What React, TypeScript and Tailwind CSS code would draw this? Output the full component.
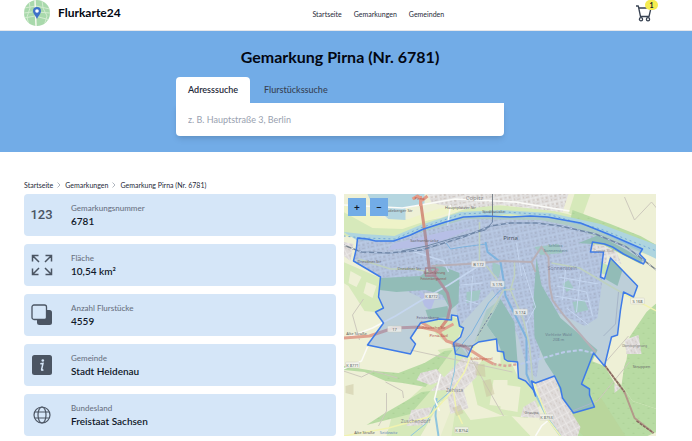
import React from "react";

const boundary =
  "M357 238 L367 239 L375 241 L393 241 L410 235 L423 229 L445 222 L463 217 L486 216 L510 217 L530 216 L547 217 L580 223 L610 235 L642 249 L639 254 L645 260 L643 264 L623 254 L612 247 L604 244 L592 242 L590 252 L603 252 L600 277 L604 279 L610 258 L637 286 L633 297 L623 292 L620 310 L617 335 L611 337 L604 366 L593 353 L581 384 L589 389 L589 395 L594 407 L573 413 L562 398 L560 388 L554 376 L535 383 L531 381 L535 396 L533 390 L525 381 L518 378 L517 362 L507 361 L504 359 L503 352 L497 351 L496 339 L478 342 L472 346 L467 357 L455 354 L453 343 L460 337 L463 328 L459 326 L457 316 L451 315 L451 320 L439 319 L420 323 L410 338 L415 344 L410 354 L367 345 L383 323 L375 312 L383 308 L378 297 L380 277 L353 261 L356 248 Z";

type Label = { x: number; y: number; t: string; c?: string; s?: number };

const labels: Label[] = [
  { x: 510, y: 240, t: "Pirna", c: "#4b5563", s: 6 },
  { x: 562, y: 270, t: "Sonnenstein", c: "#7c86a3", s: 5 },
  { x: 603, y: 252, t: "Copitz-Süd", c: "#9a948f", s: 4 },
  { x: 474, y: 200, t: "Copitz", c: "#8d8d8d", s: 6 },
  { x: 454, y: 392, t: "Zehista", c: "#8d8d8d", s: 5 },
  { x: 415, y: 423, t: "Zuschendorf", c: "#8d8d8d", s: 5 },
  { x: 634, y: 347, t: "Obervogelgesang", c: "#777777", s: 3 },
  { x: 493, y: 213, t: "Stadtbrücke", s: 4 },
  { x: 424, y: 242, t: "Sachsenbrücke", s: 4 },
  { x: 398, y: 212, t: "Radeberger Str", s: 4 },
  { x: 460, y: 209, t: "Hauptplatzer Str", s: 4 },
  { x: 369, y: 263, t: "Dresdner Str", s: 4 },
  { x: 409, y: 270, t: "Dresdner Str", s: 4 },
  { x: 434, y: 274, t: "Südumfahrung", c: "#8a5555", s: 3 },
  { x: 433, y: 280, t: "Feistenbergtunnel", c: "#8a5555", s: 3 },
  { x: 427, y: 319, t: "Feistenberg", c: "#6b5d86", s: 4 },
  { x: 431, y: 329, t: "Dohnaische Str", c: "#b34f45", s: 4 },
  { x: 438, y: 337, t: "Pirna-Süd", c: "#b34f45", s: 4 },
  { x: 462, y: 347, t: "Südumfahrung", c: "#685b71", s: 3 },
  { x: 481, y: 360, t: "Kohlbergtunnel", c: "#c4533f", s: 3 },
  { x: 555, y: 247, t: "Schloss", c: "#58818c", s: 4 },
  { x: 555, y: 252, t: "Sonnenstein", c: "#58818c", s: 4 },
  { x: 558, y: 336, t: "Viehleite Wald", c: "#6b8190", s: 4 },
  { x: 558, y: 341, t: "208 m", c: "#6b8190", s: 4 },
  { x: 356, y: 335, t: "Alte Straße", s: 4 },
  { x: 364, y: 434, t: "Alte Straße", s: 4 },
  { x: 388, y: 434, t: "Seidewitz", c: "#678dba", s: 4 },
  { x: 531, y: 414, t: "Graupa", s: 4 },
  { x: 641, y: 368, t: "Struppen", s: 4 },
  { x: 419, y: 200, t: "Pirna", c: "#b34f45", s: 4 },
];

const shields = [
  { x: 431, y: 296, t: "K 8772" },
  { x: 478, y: 264, t: "B 172" },
  { x: 497, y: 284, t: "S 176" },
  { x: 637, y: 301, t: "S 168" },
  { x: 461, y: 430, t: "K 8754" },
  { x: 546, y: 417, t: "K 8753" },
  { x: 352, y: 365, t: "K 8771" },
  { x: 520, y: 312, t: "S 174" },
  { x: 394, y: 329, t: "17" },
];

function MapDrawing() {
  return (
    <svg
      viewBox="343 194 313 242"
      preserveAspectRatio="xMidYMid slice"
      className="absolute inset-0 h-full w-full"
      role="img"
      aria-label="Karte der Gemarkung Pirna"
    >
      <defs>
        <pattern id="town" width="9" height="8" patternUnits="userSpaceOnUse" patternTransform="rotate(-12)">
          <rect width="9" height="8" fill="#dfdddc" />
          <path d="M0 0H9M0 0V8M5 0V4" stroke="#f0f0ee" strokeWidth="1" />
          <path d="M2 2h2v1H2zM6 2h2v2H6zM2 5h1v2H2zM5 6h3v1H5z" fill="#d0c9c4" />
        </pattern>
        <pattern id="village" width="6" height="9" patternUnits="userSpaceOnUse" patternTransform="rotate(-28)">
          <rect width="6" height="9" fill="#dedad9" />
          <path d="M0 0H6M0 0V9" stroke="#f2f0ef" strokeWidth="1" />
          <path d="M2 2h1v2H2zM4 5h1v2H4z" fill="#d2cbc7" />
        </pattern>
        <pattern id="trees" width="10" height="10" patternUnits="userSpaceOnUse">
          <rect width="10" height="10" fill="#b8dba3" />
          <path d="M2 4l1-2 1 2zM7 9l1-2 1 2z" fill="#abd096" />
        </pattern>
      </defs>

      {/* farmland */}
      <rect x="343" y="194" width="313" height="242" fill="#eef0d6" />
      <g fill="#d6e9ba">
        <path d="M343 208L376 224 402 225 440 218 470 207 495 205 550 210 600 222 656 246V258L600 238 540 224 460 222 400 242 343 236Z" />
        <path d="M574 194H590L581 219 568 213Z" />
        <path d="M343 262L380 278 377 297 383 308 374 312 364 311 348 286 343 283Z" />
        <path d="M500 340L518 378 530 385 540 405 527 418 500 415 477 405 470 375 482 360 500 365Z" />
        <path d="M437 350L460 346 468 357 460 392 440 402 420 436H386L392 414 430 380 445 359Z" />
        <path d="M455 398L470 420 510 415 530 436H440Z" />
        <path d="M420 323L451 316 460 320 462 330 453 345 442 340 428 326Z" />
      </g>
      <path d="M343 212L372 228 402 229 440 216 470 207 440 208 408 219 385 219 343 205Z" fill="#eef3c8" />
      <g fill="#eef0d6">
        <path d="M350 271l11 6-5 10-8-4zM366 282l10 4-4 12-9-5zM493 380h14v27l-18-2zM500 384l20 3-3 25-17-3z" />
        <path d="M440 402l15 7-4 27h-20z" opacity=".6" />
      </g>
      <g fill="url(#trees)">
        <path d="M573 354L581 384 589 389 594 407 573 413 557 404 562 398 580 428 577 436H647L656 432V409L632 401 621 385 604 366Z" />
        <path d="M621 385L628 336 645 310 656 303V409L632 401Z" />
        <path d="M374 371L398 373 424 363 444 351 452 350 425 387 402 383 385 381 364 372 343 370V366Z" />
        <path d="M383 414L421 392 430 391 410 414 390 419 366 425Z" />
        <path d="M572 210L610 224 640 236 656 245V256L633 244 600 231 570 219Z" />
      </g>
      <path d="M580 412L600 397 625 436H583L562 414Z" fill="#b9d69c" />
      <path d="M656 303L646 312 629 337 626 360 616 386 604 366 611 337 618 334 622 293 634 297 656 302Z" fill="#eef0d6" />

      {/* built-up areas */}
      <g fill="url(#town)">
        <path d="M427 194H568L562 212 500 205 463 209 431 203Z" />
        <path d="M357 239L402 238 465 219 540 220 570 226 610 243 602 279 597 318 584 326 552 310 540 348 536 378 527 370 517 335 492 290 460 325 457 316 455 300 425 300 385 281 354 259Z" />
        <path d="M592 244L614 247 621 264 610 258 604 252H590Z" />
      </g>
      <g fill="url(#village)">
        <path d="M535 383L554 376 562 398 580 427 577 436H560L540 404Z" />
        <path d="M462 358L478 362 476 377 463 390 468 408 450 414 446 390 430 391 442 379Z" />
        <path d="M420 373L436 369 445 379 430 385 416 380Z" />
        <path d="M411 410L432 407 424 425 406 426ZM523 407L535 400 541 418 520 417ZM624 340L638 335 641 354 626 354ZM343 242L353 244 350 261 343 256ZM614 383L620 388 614 393Z" />
      </g>

      {/* commercial ground beside the railway */}
      <path d="M392 244L446 231 470 229 446 239 418 247 388 250Z" fill="#e6d8ea" />
      <path d="M418 291L434 300 430 311 424 306Z" fill="#e3d6ea" />

      {/* woods inside the district */}
      <g fill="#add4a3">
        <path d="M380 278L420 276 436 264 459 273 458 303 450 310 442 295 425 290 396 292 379 290Z" />
        <path d="M425 310L447 306 449 317 428 319Z" />
        <path d="M500 299L514 322 517 362 504 359 496 339 486 325Z" />
        <path d="M536 258L541 285 560 318 597 350 581 384 589 389 594 407 573 413 562 398 554 376 545 362 534 337 533 300Z" />
        <path d="M578 243L598 235 626 250 642 260 640 264 603 245Z" />
        <path d="M610 258L622 270 617 286 605 279Z" />
      </g>
      <path d="M486 310L500 299 486 325 496 339 474 342Z" fill="#d6e9ba" />
      <g fill="#c4e5b8">
        <path d="M466 292l14-2-2 10-12 3zM562 284l6-4 5 8-7 4zM572 302l12-2 4 10-13 3zM492 262l9 4-3 12-6-6zM534 247l24-3 4 9-22 2zM600 262l7 3-2 10-5-2z" />
      </g>

      {/* water */}
      <path d="M367 194H424V204L405 208 405 220 388 219 372 205Z" fill="#b5d6e0" />
      <path d="M343 232L356 240 393 242 423 230 463 217 510 214 550 218 590 227 656 259V245L600 224 550 213 500 210 460 212 420 225 394 236 362 234Z" fill="#aed5df" />
      <path d="M343 236L362 238 394 239 420 228 461 214 505 212 550 215 600 229 656 251" fill="none" stroke="#75aad9" strokeWidth="1" strokeDasharray="2 3" />
      <g fill="none" stroke="#8fc5de" strokeWidth="2">
        <path d="M485 242L487 252 500 262 503 280 505 296 526 338 526 374 532 388 547 418 560 436" />
        <path d="M500 290L488 303 471 333 455 352 454 371 449 392 434 405 426 423 410 436" strokeWidth="1" />
        <path d="M436 398L435 416 438 436" />
        <path d="M445 242L450 249 462 247 486 244" strokeWidth="1" />
      </g>

      {/* paths and minor roads */}
      <g fill="none" stroke="#cdc9bd" strokeWidth="1">
        <path d="M343 371L361 377 373 371 397 378M385 382L402 391 403 398M386 393V411L378 426M410 350L512 372M465 349L503 416M569 412L597 401 629 362M628 336L606 361M603 336L615 324 618 292M624 197L634 220L651 202L656 208M363 299L352 315L359 340" />
      </g>
      <g fill="none" stroke="#fbfbf8" strokeWidth="2">
        <path d="M343 339L372 328 395 316 418 302 448 285 478 266M408 250L443 261 448 272M343 205L402 208 455 199 515 202 569 211M343 369L361 361 367 347M439 411L434 399 440 374M547 421L541 426 535 436M450 205L447 226" strokeWidth="1.5" />
        <path d="M522 265L535 307 526 323 530 360M516 243L521 276M556 286L586 292 592 316M554 296L590 302M566 308L588 325M558 277L598 284M565 270L562 300M580 274L576 312M460 285L482 283M464 300L478 304M472 276L470 310" strokeWidth="1" />
      </g>
      <g fill="none" stroke="#f1f3b0" strokeWidth="1.5">
        <path d="M358 259L390 269 413 269 431 272M479 222V262M514 262V276L510 290 523 320 529 345 532 379 547 419 560 436M503 290L478 335 464 372 451 392 428 417 388 428 343 436M551 263L579 268 608 285 627 296 656 311M453 391L456 411 462 424M486 266L497 280M503 290L514 289" />
      </g>
      <g fill="none" stroke="#e6c0a3" strokeWidth="2">
        <path d="M431 266L466 264 503 261 531 262 541 247 548 257 549 285 552 300 563 315 595 352M531 262L535 272" />
      </g>
      <path d="M477 336L491 313" stroke="#7b8486" strokeWidth="1" strokeDasharray="3 1" />

      {/* federal road */}
      <g fill="none" strokeLinejoin="round">
        <path d="M420 201L425 237 429 270 438 280 447 293 450 306 447 319 438 331" stroke="#d4937f" strokeWidth="3" />
        <path d="M343 338L369 336 393 328 420 327 438 331M438 331L446 341 465 347 482 358 493 364M420 322L438 332 453 324M427 276L438 269" stroke="#e0a28f" strokeWidth="3" />
        <path d="M412 199L417 196 422 200 427 196M420 196V206" stroke="#e29b88" strokeWidth="3" />
        <path d="M425 268h10v8h-10z" stroke="#c9846f" strokeWidth="1.5" />
        <path d="M493 364L506 366 518 364" stroke="#d6a79a" strokeWidth="2.5" strokeDasharray="3 2" />
        <path d="M604 365L624 392 634 418 653 433" stroke="#b3998a" strokeWidth="2" />
        <path d="M604 365L624 392M636 421L653 433" stroke="#86695e" strokeWidth="1.5" strokeDasharray="3 1" />
      </g>

      {/* railway */}
      <g fill="none" stroke="#7a838b" strokeLinejoin="round">
        <path d="M343 245L361 252 388 253 421 250 463 237 490 226 510 223 536 223 560 226 595 234 626 247 656 270" strokeWidth="1.5" />
        <path d="M401 251L426 246 457 237 485 230 492 222 492 194" strokeWidth="1" />
        <path d="M343 245L361 252 388 253 421 250 463 237 490 226 510 223 536 223 560 226 595 234 626 247 656 270" stroke="#e7e8e9" strokeWidth="1" strokeDasharray="3 5" />
        <path d="M520 364L546 357 564 352 580 350 593 353" stroke="#eceaf0" strokeWidth="2" strokeDasharray="4 2" />
      </g>
      <g fill="#c9c4a0" opacity=".5">
        <path d="M345 386l8-2v11l-8-2zM452 408l8-3 3 8-7 3zM475 365l9-1 1 13-10-2zM482 381l8-2 4 15-8 3z" />
      </g>

      {/* district area */}
      <path d={boundary} fill="#5f90e0" fillOpacity=".34" stroke="#3e7be8" strokeWidth="1.5" strokeLinejoin="round" />

      <g fontFamily="Noto Sans, sans-serif" textAnchor="middle">
        {labels.map((l, i) => (
          <text key={i} x={l.x} y={l.y} fontSize={l.s ?? 4} fill={l.c ?? "#626262"}>
            {l.t}
          </text>
        ))}
        {shields.map((s) => (
          <g key={s.t}>
            <rect x={s.x - 7} y={s.y - 3} width="14" height="6" rx="1" fill="#f4f4ee" stroke="#c8c8bf" strokeWidth=".5" opacity=".75" />
            <text x={s.x} y={s.y + 1.5} fontSize="4" fill="#58605f">
              {s.t}
            </text>
          </g>
        ))}
      </g>
    </svg>
  );
}

function Logo() {
  return (
    <svg viewBox="0 0 26 26" className="size-[26px]" aria-hidden="true">
      <defs>
        <clipPath id="disc">
          <circle cx="13" cy="13" r="13" />
        </clipPath>
      </defs>
      <g clipPath="url(#disc)">
        <rect width="26" height="26" fill="#a9d9ac" />
        <path d="M0 8L12 6 26 9M0 18L11 16 26 20M5 0L6 8 3 17 5 26M18 0L19 8 23 16 20 26M12 12L26 13M0 13L8 12" fill="none" stroke="#d3ecd0" strokeWidth="1" />
        <path d="M11 0L12 26" stroke="#f5f8ef" strokeWidth="1.5" />
      </g>
      <path d="M13 19C12 16 9 14 9 11a4 4 0 0 1 8 0C17 14 14 16 13 19Z" fill="#3f72c8" />
      <circle cx="13" cy="11" r="1.8" fill="#fff" />
    </svg>
  );
}

function CartIcon() {
  return (
    <svg viewBox="0 0 16 17" className="h-[17px] w-4" fill="none" stroke="#374151" strokeWidth="1.3" aria-hidden="true">
      <path d="M0 1H2.3L4.5 11.5H13L15 3H3" strokeLinejoin="round" />
      <circle cx="5" cy="14.2" r="1.6" />
      <circle cx="12" cy="14.2" r="1.6" />
    </svg>
  );
}

function ExpandIcon() {
  return (
    <svg viewBox="0 0 22 22" className="size-[22px]" fill="none" stroke="#4b5563" strokeWidth="1.5" aria-hidden="true">
      <path d="M1.5 7.5V1.5H7.5M1.5 1.5L8 8M14.5 1.5H20.5V7.5M20.5 1.5L14 8M1.5 14.5V20.5H7.5M1.5 20.5L8 14M20.5 14.5V20.5H14.5M20.5 20.5L14 14" />
    </svg>
  );
}

function CopyIcon() {
  return (
    <svg viewBox="0 0 22 22" className="size-[22px]" aria-hidden="true">
      <rect x="6" y="6" width="15" height="15" rx="2.5" fill="#4b5563" />
      <rect x="1" y="1" width="14.5" height="14.5" rx="2" fill="#d5e6f8" stroke="#4b5563" strokeWidth="1.3" />
    </svg>
  );
}

function InfoIcon() {
  return (
    <svg viewBox="0 0 22 22" className="size-[22px]" aria-hidden="true">
      <rect x="1" y="1" width="20" height="20" rx="2.5" fill="#4b5563" />
      <circle cx="11.8" cy="6.5" r="1.3" fill="#d5e6f8" />
      <path d="M9.3 9.8L12 9.4 10.6 15.6Q10.5 16.7 12.4 15.8" fill="none" stroke="#d5e6f8" strokeWidth="1.5" />
    </svg>
  );
}

function GlobeIcon() {
  return (
    <svg viewBox="0 0 18 18" className="size-[18px]" fill="none" stroke="#4b5563" strokeWidth="1.2" aria-hidden="true">
      <circle cx="9" cy="9" r="8" />
      <ellipse cx="9" cy="9" rx="4" ry="8" />
      <path d="M2 6H16M2 12H16" />
    </svg>
  );
}

const facts: { label: string; value: React.ReactNode; icon: React.ReactNode }[] = [
  { label: "Gemarkungsnummer", value: "6781", icon: <span className="font-['Roboto',sans-serif] text-[13px] font-medium text-gray-600">123</span> },
  { label: "Fläche", value: "10,54 km²", icon: <ExpandIcon /> },
  { label: "Anzahl Flurstücke", value: "4559", icon: <CopyIcon /> },
  { label: "Gemeinde", value: "Stadt Heidenau", icon: <InfoIcon /> },
  { label: "Bundesland", value: "Freistaat Sachsen", icon: <GlobeIcon /> },
];

function Chevron() {
  return (
    <svg viewBox="0 0 4 6" className="h-[6px] w-1" fill="none" stroke="#9ca3af" strokeWidth=".8" aria-hidden="true">
      <path d="M.5 .5L3 3 .5 5.5" />
    </svg>
  );
}

export default function App() {
  return (
    <div className="min-h-screen bg-white font-['Lato','Noto_Sans',sans-serif] text-gray-900">
      <header className="flex h-[31px] items-start justify-between border-b border-gray-200 pr-9 pl-6">
        <a href="#" className="flex items-center gap-2 text-[12px] leading-[26px] font-bold text-gray-950">
          <Logo />
          Flurkarte24
        </a>
        <nav className="flex gap-3 text-[7px] leading-7 text-gray-800">
          <a href="#">Startseite</a>
          <a href="#">Gemarkungen</a>
          <a href="#">Gemeinden</a>
        </nav>
        <button type="button" aria-label="Warenkorb" className="relative mt-[5px] mr-1 justify-self-end">
          <CartIcon />
          <span className="absolute -top-[5px] left-[9px] flex h-[10px] w-[13px] items-center justify-center rounded-full bg-[#f5ec50] text-[7px] leading-none font-bold">
            1
          </span>
        </button>
      </header>

      <section className="bg-[#72ace7] pt-4 pr-9 pb-4 pl-6">
        <div className="mx-auto max-w-[328px]">
          <h1 className="text-center text-[16px] leading-5 font-bold whitespace-nowrap text-gray-950">Gemarkung Pirna (Nr. 6781)</h1>
          <div role="tablist" className="mt-[10px] flex text-[9px] leading-[26px]">
            <button type="button" role="tab" aria-selected="true" className="rounded-t bg-white px-3 font-semibold text-gray-800">
              Adresssuche
            </button>
            <button type="button" role="tab" aria-selected="false" className="px-[14px] font-medium text-gray-700">
              Flurstückssuche
            </button>
          </div>
          <input
            type="text"
            aria-label="Adresse"
            placeholder="z. B. Hauptstraße 3, Berlin"
            className="block h-[33px] w-full rounded-b bg-white px-3 text-[9px] text-gray-800 shadow-md outline-none placeholder:text-gray-400"
          />
        </div>
      </section>

      <main className="pt-7 pr-9 pb-1 pl-6">
        <nav aria-label="Brotkrumen" className="flex items-center gap-1 text-[7px] leading-[10px] text-gray-800">
          <a href="#">Startseite</a>
          <Chevron />
          <a href="#">Gemarkungen</a>
          <Chevron />
          <span>Gemarkung Pirna (Nr. 6781)</span>
        </nav>
        <div className="mt-1 grid grid-cols-2 gap-2">
          <dl className="flex flex-col gap-2">
            {facts.map((f) => (
              <div key={f.label} className="flex h-[42px] items-center gap-3 rounded bg-[#d5e6f8] px-[6px]">
                <div className="flex w-[23px] shrink-0 items-center justify-center">{f.icon}</div>
                <div className="pl-[6px]">
                  <dt className="text-[8px] leading-3 font-medium text-gray-500">{f.label}</dt>
                  <dd className="text-[10px] leading-[14px] font-semibold text-gray-900">{f.value}</dd>
                </div>
              </div>
            ))}
          </dl>
          <div className="relative overflow-hidden bg-[#eef0d6]">
            <MapDrawing />
            <div className="absolute top-1 left-1 flex gap-1">
              <button type="button" aria-label="Vergrößern" className="size-[18px] bg-[#72ace7] text-[10px] leading-none font-bold">
                +
              </button>
              <button type="button" aria-label="Verkleinern" className="size-[18px] bg-[#72ace7] text-[10px] leading-none font-bold">
                −
              </button>
            </div>
          </div>
        </div>
      </main>
    </div>
  );
}
